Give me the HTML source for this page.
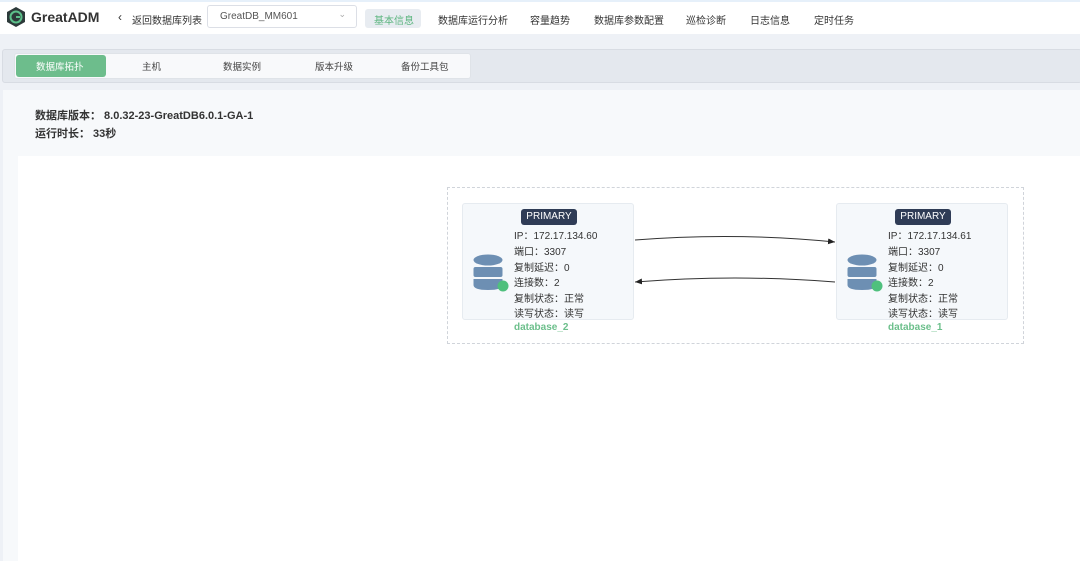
<!DOCTYPE html>
<html><head><meta charset="utf-8"><style>
*{margin:0;padding:0;box-sizing:border-box}
body{width:1080px;height:561px;overflow:hidden;background:#eef1f6;font-family:"Liberation Sans","Noto Sans CJK SC",sans-serif;color:#333;position:relative}
.top{position:absolute;left:0;top:0;width:1080px;height:34px;background:#fff;border-top:2px solid #e6f0fa}
.abs{position:absolute;white-space:nowrap}
.nav{font-size:10px;color:#333;top:12px}
.tabs{position:absolute;left:2px;top:49px;width:1080px;height:34px;background:#e4e8ee;border:1px solid #d8dce3;border-radius:3px}
.tabin{position:absolute;left:11px;top:3px;width:457px;height:26px;background:#f8f9fb;border-radius:3px;border:1px solid #dfe3e8}
.tab{position:absolute;top:5px;font-size:9.5px;color:#444}
.info{position:absolute;left:3px;top:90px;width:1077px;height:471px;background:#f7f9fb}
.white{position:absolute;left:18px;top:156px;width:1062px;height:405px;background:#fff}
.box{position:absolute;top:187px;left:447px;width:577px;height:157px;border:1px dashed #d0d4da}
.node{position:absolute;top:203px;width:172px;height:117px;background:#f5f8fb;border:1px solid #e6ebf0;border-radius:3px}
.badge{position:absolute;top:5px;left:58px;width:56px;height:16px;background:#2f3c56;color:#fff;font-size:10px;line-height:16px;text-align:center;border-radius:3px}
.ln{position:absolute;left:51px;font-size:10px;color:#333}
.nm{position:absolute;font-size:10px;color:#6cbf8b;top:322px;font-weight:bold}
</style></head><body>
<div class="top"></div>
<svg class="abs" style="left:6px;top:7px" width="20" height="20" viewBox="0 0 20 20"><polygon points="10,0 19,5 19,15 10,20 1,15 1,5" fill="#2d3a3a"/><circle cx="10" cy="10" r="5.5" fill="none" stroke="#5cc08a" stroke-width="2"/><path d="M10 10h4" stroke="#5cc08a" stroke-width="2"/></svg>
<div class="abs" style="left:31px;top:9px;font-size:14px;font-weight:bold;color:#333">GreatADM</div>
<div class="abs nav" style="left:118px;top:10px;font-size:12px">‹</div>
<div class="abs nav" style="left:132px">返回数据库列表</div>
<div class="abs" style="left:207px;top:5px;width:150px;height:23px;border:1px solid #dcdfe6;border-radius:3px;font-size:10px;color:#555;padding:5px 12px">GreatDB_MM601<span style="position:absolute;right:10px;top:3px;color:#aaa;font-size:9px">⌄</span></div>
<div class="abs" style="left:365px;top:9px;width:56px;height:19px;background:#e8ecf1;border-radius:3px"></div>
<div class="abs nav" style="left:374px;color:#5cb57f">基本信息</div>
<div class="abs nav" style="left:438px">数据库运行分析</div>
<div class="abs nav" style="left:530px">容量趋势</div>
<div class="abs nav" style="left:594px">数据库参数配置</div>
<div class="abs nav" style="left:686px">巡检诊断</div>
<div class="abs nav" style="left:750px">日志信息</div>
<div class="abs nav" style="left:814px">定时任务</div>
<div class="tabs"><div class="tabin">
<div class="abs" style="left:1px;top:1px;width:90px;height:22px;background:#6dbd8c;border-radius:3px"></div>
<div class="tab" style="left:21px;color:#fff">数据库拓扑</div>
<div class="tab" style="left:127px">主机</div>
<div class="tab" style="left:208px">数据实例</div>
<div class="tab" style="left:300px">版本升级</div>
<div class="tab" style="left:386px">备份工具包</div>
</div></div>
<div class="info"></div>
<div class="abs" style="left:35px;top:107px;font-size:11px;font-weight:bold;color:#333">数据库版本： 8.0.32-23-GreatDB6.0.1-GA-1</div>
<div class="abs" style="left:35px;top:125px;font-size:11px;font-weight:bold;color:#333">运行时长： 33秒</div>
<div class="white"></div>
<div class="box"></div>
<svg class="abs" style="left:0;top:0" width="1080" height="561"><defs><marker id="a" markerWidth="8" markerHeight="8" refX="7" refY="4" orient="auto"><path d="M0 1L7 4L0 7z" fill="#222"/></marker></defs>
<path d="M635 240Q735 232 835 242" stroke="#333" fill="none" stroke-width="1" marker-end="url(#a)"/>
<path d="M835 282Q735 274 635 282" stroke="#333" fill="none" stroke-width="1" marker-end="url(#a)"/></svg>
<div class="node" style="left:462px"><div class="badge">PRIMARY</div>
<div class="ln" style="top:23px">IP：172.17.134.60</div><div class="ln" style="top:39px">端口：3307</div><div class="ln" style="top:55px">复制延迟：0</div><div class="ln" style="top:70px">连接数：2</div><div class="ln" style="top:86px">复制状态：正常</div><div class="ln" style="top:101px">读写状态：读写</div>
<svg style="position:absolute;left:10px;top:50px" width="40" height="40" viewBox="0 0 40 40"><ellipse cx="15" cy="6" rx="14.5" ry="5.5" fill="#6d8fb3"/><rect x="0.5" y="13" width="29" height="10" rx="2" fill="#6d8fb3"/><path d="M0.5 25h29v6q0 5-14.5 5q-14.5 0-14.5-5z" fill="#6d8fb3"/><circle cx="30" cy="32" r="5.5" fill="#4fc07d"/></svg></div>
<div class="nm" style="left:514px">database_2</div>
<div class="node" style="left:836px"><div class="badge">PRIMARY</div>
<div class="ln" style="top:23px">IP：172.17.134.61</div><div class="ln" style="top:39px">端口：3307</div><div class="ln" style="top:55px">复制延迟：0</div><div class="ln" style="top:70px">连接数：2</div><div class="ln" style="top:86px">复制状态：正常</div><div class="ln" style="top:101px">读写状态：读写</div>
<svg style="position:absolute;left:10px;top:50px" width="40" height="40" viewBox="0 0 40 40"><ellipse cx="15" cy="6" rx="14.5" ry="5.5" fill="#6d8fb3"/><rect x="0.5" y="13" width="29" height="10" rx="2" fill="#6d8fb3"/><path d="M0.5 25h29v6q0 5-14.5 5q-14.5 0-14.5-5z" fill="#6d8fb3"/><circle cx="30" cy="32" r="5.5" fill="#4fc07d"/></svg></div>
<div class="nm" style="left:888px">database_1</div>
</body></html>
